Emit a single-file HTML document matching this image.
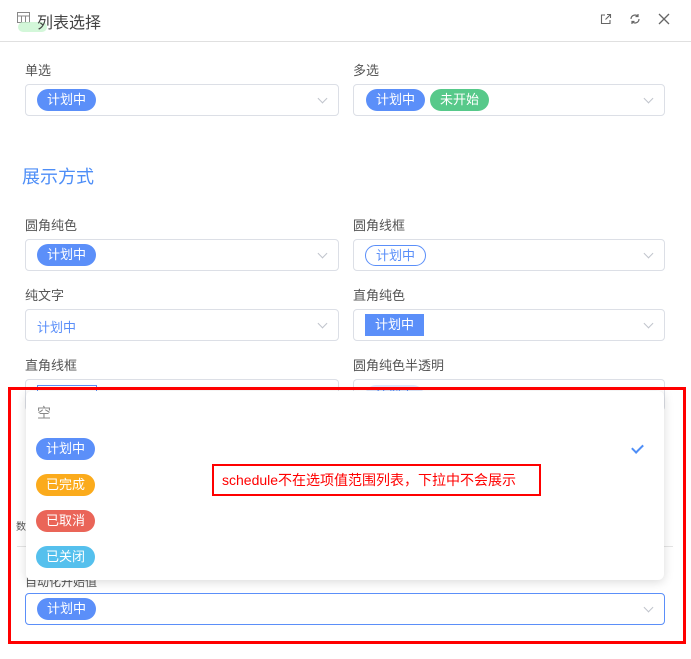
<!DOCTYPE html><html><head><meta charset="utf-8"><style>
*{margin:0;padding:0;box-sizing:border-box}
body{width:691px;height:659px;background:#fff;font-family:"Liberation Sans","Noto Sans CJK SC",sans-serif;position:relative;overflow:hidden;color:#555}
.a{position:absolute}
.lbl{position:absolute;font-size:13px;color:#555}
.sel{position:absolute;height:32px;border:1px solid #dcdfe6;border-radius:4px;background:#fff}
.sel .ar{position:absolute;right:12px;top:10px;width:7px;height:7px;border-right:1px solid #c0c4cc;border-bottom:1px solid #c0c4cc;transform:rotate(45deg)}
.tag{position:absolute;height:22px;line-height:22px;border-radius:11px;color:#fff;font-size:13px;padding:0 10px;white-space:nowrap}
.b{background:#5b8ff9}
</style></head><body>
<svg class="a" style="left:17px;top:12px" width="14" height="12" viewBox="0 0 14 12"><rect x="0.5" y="0.5" width="12" height="10" fill="none" stroke="#888"/><line x1="0.5" y1="4" x2="12.5" y2="4" stroke="#888"/><line x1="4.5" y1="4" x2="4.5" y2="10.5" stroke="#888"/><line x1="8.5" y1="4" x2="8.5" y2="10.5" stroke="#888"/></svg>
<div class="a" style="left:18px;top:22px;width:29px;height:10px;background:#c8f5d0;border-radius:5px;opacity:.8"></div>
<div class="a" style="left:37px;top:9px;font-size:16px;color:#444">列表选择</div>
<svg class="a" style="left:600px;top:13px" width="12" height="12" viewBox="0 0 12 12" fill="none" stroke="#666" stroke-width="1.1"><path d="M5 2H1.5v8.5H10V7"/><path d="M7 1.5h3.5V5M10.5 1.5L5.5 6.5"/></svg>
<svg class="a" style="left:629px;top:13px" width="12" height="12" viewBox="0 0 12 12" fill="none" stroke="#666" stroke-width="1.2"><path d="M10 6a4 4 0 0 1-7 2.6M2 6a4 4 0 0 1 7-2.6"/><path d="M9 1v2.5H6.5M3 11V8.5h2.5"/></svg>
<svg class="a" style="left:658px;top:13px" width="12" height="12" viewBox="0 0 12 12" stroke="#666" stroke-width="1.3"><path d="M1 1l10 10M11 1L1 11"/></svg>
<div class="a" style="left:0;top:41px;width:691px;height:1px;background:#e0e0e0"></div>

<div class="lbl" style="left:25px;top:60px">单选</div>
<div class="sel" style="left:25px;top:84px;width:314px"><div class="tag b" style="left:11px;top:4px">计划中</div><div class="ar"></div></div>
<div class="lbl" style="left:353px;top:60px">多选</div>
<div class="sel" style="left:353px;top:84px;width:312px"><div class="tag b" style="left:12px;top:4px">计划中</div><div class="tag" style="left:76px;top:4px;background:#57c98a">未开始</div><div class="ar"></div></div>

<div class="a" style="left:22px;top:163px;font-size:18px;color:#4e8ef7">展示方式</div>

<div class="lbl" style="left:25px;top:215px">圆角纯色</div>
<div class="sel" style="left:25px;top:239px;width:314px"><div class="tag b" style="left:11px;top:4px">计划中</div><div class="ar"></div></div>
<div class="lbl" style="left:353px;top:215px">圆角线框</div>
<div class="sel" style="left:353px;top:239px;width:312px"><div class="tag" style="left:11px;top:5px;color:#5b8ff9;border:1px solid #5b8ff9;line-height:19px;height:21px">计划中</div><div class="ar"></div></div>

<div class="lbl" style="left:25px;top:285px">纯文字</div>
<div class="sel" style="left:25px;top:309px;width:314px"><div class="a" style="left:11px;top:7px;font-size:13px;color:#5b8ff9">计划中</div><div class="ar"></div></div>
<div class="lbl" style="left:353px;top:285px">直角纯色</div>
<div class="sel" style="left:353px;top:309px;width:312px"><div class="tag b" style="left:11px;top:4px;border-radius:0">计划中</div><div class="ar"></div></div>

<div class="lbl" style="left:25px;top:355px">直角线框</div>
<div class="sel" style="left:25px;top:379px;width:314px"><div class="a" style="left:11px;top:5px;width:60px;height:21px;border:1px solid #5b8ff9"></div></div>
<div class="lbl" style="left:353px;top:355px">圆角纯色半透明</div>
<div class="sel" style="left:353px;top:379px;width:312px"><div class="tag" style="left:11px;top:5px;background:#dde8fe;color:#5b8ff9">计划中</div></div>

<div class="lbl" style="left:16px;top:518px;font-size:10px">数</div>
<div class="a" style="left:17px;top:546px;width:656px;height:1px;background:#e4e4e4"></div>
<div class="lbl" style="left:25px;top:573px;font-size:12px">自动化开始值</div>
<div class="sel" style="left:25px;top:593px;width:640px;border-color:#5b8ff9"><div class="tag b" style="left:11px;top:4px">计划中</div><div class="ar"></div></div>

<div class="a" style="left:26px;top:391px;width:638px;height:189px;background:#fff;border-radius:6px;box-shadow:0 2px 10px rgba(0,0,0,.15)">
<div class="a" style="left:11px;top:12px;font-size:14px;color:#888">空</div>
<div class="tag b" style="left:10px;top:47px">计划中</div>
<div class="tag" style="left:10px;top:83px;background:#fbab1c">已完成</div>
<div class="tag" style="left:10px;top:119px;background:#ea6558">已取消</div>
<div class="tag" style="left:10px;top:155px;background:#55c0ed">已关闭</div>
<div class="a" style="left:608px;top:51px;width:7px;height:11px;border-right:2px solid #4e8ef7;border-bottom:2px solid #4e8ef7;transform:rotate(45deg)"></div>
</div>

<div class="a" style="left:212px;top:464px;width:329px;height:32px;border:2px solid #f00;color:#f00;font-size:14px;line-height:28px;padding-left:8px;white-space:nowrap">schedule不在选项值范围列表，下拉中不会展示</div>
<div class="a" style="left:8px;top:387px;width:678px;height:257px;border:3px solid #f00"></div>
</body></html>
